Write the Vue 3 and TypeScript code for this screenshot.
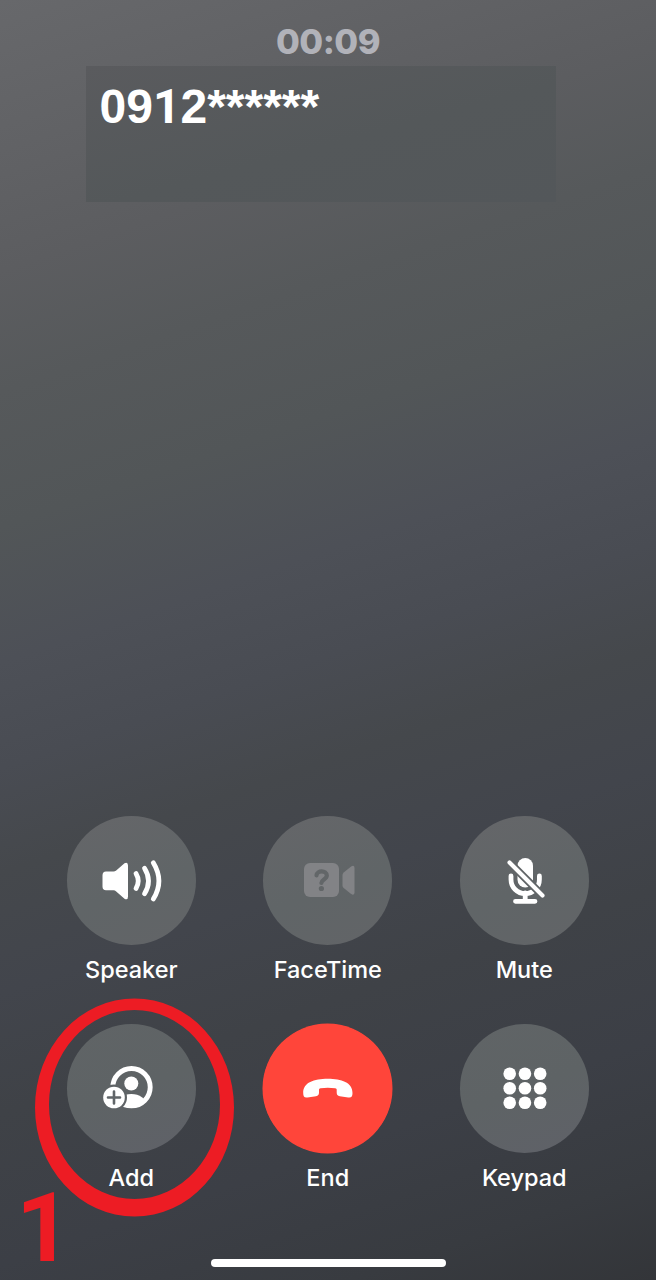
<script setup lang="ts">
interface CallAction {
  id: string
  label: string
  disabled?: boolean
}

const duration = '00:09'
const numberStart = '09'
const numberEnd = '2******'

const actions: CallAction[] = [
  { id: 'speaker', label: 'Speaker' },
  { id: 'facetime', label: 'FaceTime', disabled: true },
  { id: 'mute', label: 'Mute' },
  { id: 'add', label: 'Add' },
  { id: 'end', label: 'End' },
  { id: 'keypad', label: 'Keypad' },
]

const keys = [8.5, 23.75, 39]
const rows = [8.5, 23, 37.5]
</script>

<template>
  <main class="call">
    <div class="duration">{{ duration }}</div>
    <div class="caller">
      <span class="number">{{ numberStart }}<span class="one">1</span>{{ numberEnd }}</span>
    </div>

    <section class="actions">
      <div v-for="a in actions" :key="a.id" class="action">
        <button class="round" :class="a.id" :disabled="a.disabled" :aria-label="a.label">
          <svg v-if="a.id === 'speaker'" width="129" height="129" viewBox="0 0 129 129">
            <path
              d="M39 55.500H46.500Q48 55.500 49.200 54.400L57.500 47.200Q61 45.500 61 49.500V80.500Q61 84.500 57.500 82.800L49.200 75.500Q48 74.300 46.500 74.300H39Q35.500 74.300 35.500 70.500V59.300Q35.500 55.500 39 55.500Z"
              fill="#fff"
            />
            <g fill="none" stroke="#fff" stroke-width="4.800" stroke-linecap="round">
              <path d="M69 57.500Q73.500 65 69 72.500" />
              <path d="M77.500 52.300Q85.500 65 77.500 77.800" />
              <path d="M86.300 46.700Q97.500 65 86.300 83" />
            </g>
          </svg>

          <svg v-else-if="a.id === 'facetime'" width="129" height="129" viewBox="0 0 129 129">
            <rect x="41" y="47" width="35" height="34" rx="6" fill="#828386" />
            <path
              d="M79.500 59Q79.500 57.500 80.700 56.500L87.800 50.700Q91.500 48.500 91.500 52V76.500Q91.500 80 87.800 77.800L80.700 72Q79.500 71 79.500 69.500Z"
              fill="#828386"
            />
            <path d="M53.500 59.400C53.800 54 63.800 54 63.800 59.600C63.800 63.500 58.400 63.500 58.400 67" fill="none" stroke="#626668" stroke-width="4.200" stroke-linecap="round" />
            <circle cx="58.400" cy="72.500" r="2.600" fill="#626668" />
          </svg>

          <svg v-else-if="a.id === 'mute'" width="129" height="129" viewBox="0 0 129 129">
            <defs>
              <mask id="mic-cut" maskUnits="userSpaceOnUse" x="0" y="0" width="129" height="129">
                <rect width="129" height="129" fill="#fff" />
                <path d="M49.500 46.500L82.500 79.500" stroke="#000" stroke-width="7.800" stroke-linecap="round" />
              </mask>
            </defs>
            <g mask="url(#mic-cut)">
              <rect x="57.500" y="42" width="15.500" height="29.500" rx="7.750" fill="#fff" />
              <path d="M51 60V63.500A14.200 14.200 0 0 0 79.400 63.500V60" fill="none" stroke="#fff" stroke-width="4.800" stroke-linecap="round" />
            </g>
            <path d="M65.200 77V85M55.500 85.300H75" fill="none" stroke="#fff" stroke-width="4.800" stroke-linecap="round" />
            <path d="M49.500 46.500L82.500 79.500" stroke="#fff" stroke-width="4.100" stroke-linecap="round" />
          </svg>

          <svg v-else-if="a.id === 'add'" width="129" height="129" viewBox="0 0 129 129">
            <defs>
              <mask id="add-cut" maskUnits="userSpaceOnUse" x="0" y="0" width="129" height="129">
                <rect width="129" height="129" fill="#fff" />
                <circle cx="47" cy="73.500" r="13" fill="#000" />
              </mask>
              <clipPath id="add-clip"><circle cx="64.500" cy="63.200" r="20.500" /></clipPath>
            </defs>
            <g mask="url(#add-cut)">
              <circle cx="64.500" cy="63.200" r="18.700" fill="none" stroke="#fff" stroke-width="4.900" />
              <circle cx="64.300" cy="59.500" r="7" fill="#fff" />
              <ellipse cx="64.300" cy="81" rx="15" ry="11" fill="#fff" clip-path="url(#add-clip)" />
            </g>
            <circle cx="47" cy="73.500" r="10.800" fill="#fff" />
            <path d="M47 67.500V79.500M41 73.500H53" stroke="#606568" stroke-width="2.600" stroke-linecap="round" />
          </svg>

          <svg v-else-if="a.id === 'end'" width="129" height="129" viewBox="0 0 129 129">
            <path
              d="M40.200 69C40.200 58.500 51 54.800 64.700 54.800C78.500 54.800 89.500 58.500 89.500 69C89.500 72.800 88.300 74 85.200 73.500L76.800 72.200C74.500 71.800 73.700 70.800 73.700 68.500V65.800C73.700 64.700 73.200 64.300 72.200 64.200Q64.700 63.200 57.500 64.200C56.500 64.300 56 64.700 56 65.800V68.500C56 70.800 55.200 71.800 53 72.200L44.500 73.500C41.400 74 40.200 72.800 40.200 69Z"
              fill="#fff"
            />
          </svg>

          <svg v-else width="129" height="129" viewBox="0 0 129 129">
            <g transform="translate(41.200 41.200)" fill="#fff">
              <template v-for="y in rows" :key="y">
                <circle v-for="x in keys" :key="x" :cx="x" :cy="y" r="6.300" />
              </template>
            </g>
          </svg>
        </button>
        <span class="label">{{ a.label }}</span>
      </div>
    </section>

    <div class="home-bar"></div>

    <svg class="ring" width="200" height="220" viewBox="0 0 200 220" aria-hidden="true">
      <path
        fill-rule="evenodd"
        fill="#ed1c24"
        d="M0 109.500A99.500 109 0 0 1 199 109.500A99.500 109 0 0 1 0 109.500ZM14 106.500A85.500 94.500 0 0 0 185 106.500A85.500 94.500 0 0 0 14 106.500Z"
      />
    </svg>
    <span class="step">1</span>
  </main>
</template>

<style>
body {
  margin: 0;
}
</style>

<style scoped>
.call {
  position: relative;
  box-sizing: border-box;
  width: 656px;
  height: 1280px;
  padding-top: 19px;
  display: flex;
  flex-direction: column;
  align-items: center;
  background: linear-gradient(161deg, #67686b 0%, #616265 10%, #5c5d60 18%, #56595b 26%, #525658 35%, #4d5057 44%, #494c53 51%, #45484c 58%, #42454c 66%, #3f4247 74%, #3c3f46 84%, #383b40 93%, #333539 100%);
  font-family: Inter, "Liberation Sans", sans-serif;
  color: #fff;
}
.duration {
  height: 47px;
  line-height: 46px;
  font-size: 34.500px;
  font-weight: 800;
  letter-spacing: -0.500px;
  color: #b1b2b9;
}
.caller {
  box-sizing: border-box;
  width: 470px;
  height: 136px;
  margin-right: 14px;
  padding: 13px 12px 12px 13.500px;
  background: linear-gradient(165deg, #5a5b5e, #54585a 55%, #53575a);
  font-family: "Liberation Sans", Arial, sans-serif;
  font-size: 48px;
  line-height: 55px;
  font-weight: 700;
}
.number {
  display: block;
}
.one {
  font-family: Roboto, "Liberation Sans", sans-serif;
  line-height: 1;
}
.actions {
  width: 590px;
  margin-top: 614px;
  display: grid;
  grid-template-columns: repeat(3, 196.500px);
  row-gap: 36px;
}
.action {
  display: flex;
  flex-direction: column;
  align-items: center;
}
.round {
  width: 129px;
  height: 129px;
  padding: 0;
  border: 0;
  border-radius: 50%;
  background: linear-gradient(160deg, #656669, #606567 55%, #626467);
}
.round.end {
  background: #ff453a;
  box-shadow: 0 0 0 0.500px #ff453a;
}
.round.add,
.round.keypad {
  background: linear-gradient(160deg, #606466, #5e6365 50%, #5f6168);
}
.round svg {
  display: block;
}
.label {
  margin-top: 10px;
  height: 33px;
  line-height: 29px;
  font-size: 23.500px;
  font-weight: 500;
}
.home-bar {
  width: 235px;
  height: 8px;
  margin-top: 63px;
  border-radius: 4px;
  background: #fff;
}
.ring {
  position: absolute;
  left: 35px;
  top: 998px;
}
.step {
  position: absolute;
  left: 16px;
  top: 1181px;
  font: 700 97px/94px Roboto, "Liberation Sans", sans-serif;
  color: #ed1c24;
}
</style>
